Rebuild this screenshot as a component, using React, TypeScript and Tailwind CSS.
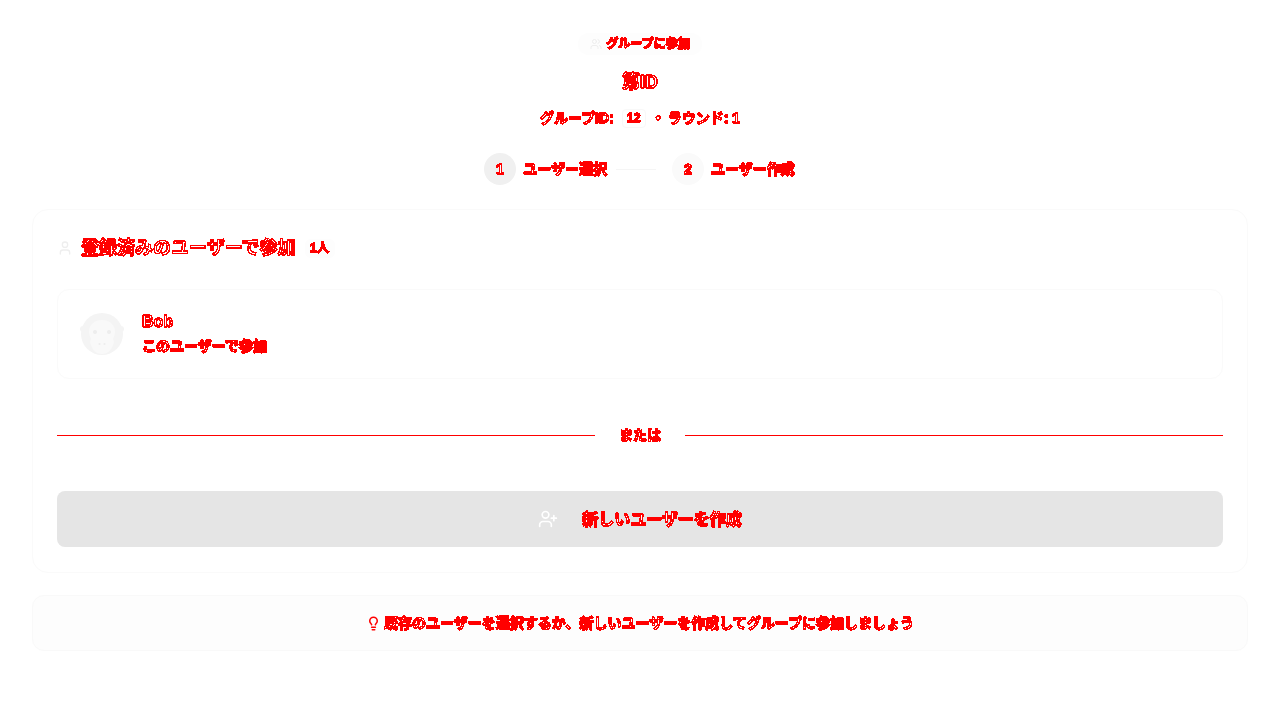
import type { ReactNode } from "react";
import { Lightbulb, User, UserPlus, Users } from "lucide-react";

const jp = "font-['Liberation_Sans','Noto_Sans_CJK_JP',sans-serif]";

// hard-edged outlined text, the filter is defined once in App
function T({ children }: { children: ReactNode }) {
  return <span className="text-white [-webkit-text-stroke:1px_#ff0000] [filter:url(#crisp)]">{children}</span>;
}

function MonkeyAvatar() {
  return (
    <svg width="44" height="44" viewBox="0 0 44 44" className="shrink-0">
      <circle cx="22" cy="22" r="21" fill="#f4f4f4" />
      <circle cx="3" cy="17" r="3" fill="#f4f4f4" />
      <circle cx="41" cy="17" r="3" fill="#f4f4f4" />
      <path d="M22 8c-8 0-13 5-13 12 0 3 1 5 2 7-1 2-1 4 0 6 2 6 6 9 11 9s9-3 11-9c1-2 1-4 0-6 1-2 2-4 2-7 0-7-5-12-13-12z" fill="#f9f9f9" />
      <circle cx="15" cy="20" r="2" fill="#ededed" />
      <circle cx="29" cy="20" r="2" fill="#ededed" />
      <circle cx="19.5" cy="32" r="1" fill="#ededed" />
      <circle cx="24.5" cy="32" r="1" fill="#ededed" />
    </svg>
  );
}

export default function App() {
  return (
    <main className={`min-h-[720px] bg-white px-8 pt-[33px] ${jp}`}>
      <svg width="0" height="0" className="absolute">
        <filter id="crisp" colorInterpolationFilters="sRGB" x="-5%" y="-20%" width="110%" height="140%">
          <feComponentTransfer>
            <feFuncR type="discrete" tableValues="1 1" />
            <feFuncG type="discrete" tableValues="0 0 0 0 0 1" />
            <feFuncB type="discrete" tableValues="0 0 0 0 0 1" />
            <feFuncA type="discrete" tableValues="0 1 1 1" />
          </feComponentTransfer>
        </filter>
      </svg>

      <header className="flex flex-col items-center">
        <p className="flex h-[22px] w-[124px] items-center justify-center gap-1 rounded-full bg-[#fdfdfd] text-xs font-bold">
          <Users size={12} className="text-[#eeeeee]" />
          <T>グループに参加</T>
        </p>
        <h1 className="mt-[13px] text-lg leading-7 font-bold">
          <T>第ID</T>
        </h1>
        <div className="mt-[12px] flex h-[20px] items-center text-sm font-bold">
          <T>グループID:</T>
          <span className="mr-[6px] ml-[8px] flex h-[19px] w-[24px] items-center justify-center rounded border border-[#f8f8f8] text-xs">
            <T>12</T>
          </span>
          <span className="mx-1">
            <T>•</T>
          </span>
          <span className="ml-[3px]">
            <T>ラウンド: 1</T>
          </span>
        </div>
        <ol className="mt-[25px] flex items-center text-sm font-bold">
          <li className="flex items-center gap-[7px]">
            <span className="flex size-8 items-center justify-center rounded-full bg-[#f0f0f0]">
              <T>1</T>
            </span>
            <T>ユーザー選択</T>
          </li>
          <li className="mr-4 ml-[9px] h-px w-10 bg-[#f5f5f5]" />
          <li className="flex items-center gap-[7px] pr-px">
            <span className="flex size-8 items-center justify-center rounded-full bg-[#fafafa]">
              <T>2</T>
            </span>
            <T>ユーザー作成</T>
          </li>
        </ol>
      </header>

      <section className="mt-6 rounded-2xl border border-[#fafafa] px-6 pt-6 pb-[25px]">
        <div className="flex h-7 items-center">
          <User size={16} className="text-[#eeeeee]" />
          <h2 className="ml-2 text-lg font-bold">
            <T>登録済みのユーザーで参加</T>
          </h2>
          <span className="ml-[9px] flex h-[19px] w-[30px] items-center justify-center rounded-md bg-[#fdfdfd] text-xs font-bold">
            <T>1人</T>
          </span>
        </div>

        <button className="mt-[27px] flex h-[90px] w-full items-center gap-[18px] rounded-xl border border-[#fafafa] px-[22px] text-left">
          <MonkeyAvatar />
          <span className="flex flex-col gap-1 font-bold">
            <span className="text-base leading-5">
              <T>Bob</T>
            </span>
            <span className="text-sm leading-5">
              <T>このユーザーで参加</T>
            </span>
          </span>
        </button>

        <div className="mt-[46px] flex items-center">
          <div className="h-px flex-1 bg-[#ff0000]" />
          <span className="px-6 text-sm font-bold">
            <T>または</T>
          </span>
          <div className="h-px flex-1 bg-[#ff0000]" />
        </div>

        <button className="mt-[46px] flex h-14 w-full items-center justify-center gap-6 rounded-lg bg-[#e5e5e5] text-base font-bold">
          <UserPlus size={20} className="text-white" />
          <span className="pt-0.5">
            <T>新しいユーザーを作成</T>
          </span>
        </button>
      </section>

      <aside className="mt-[22px] flex h-14 items-center justify-center gap-[3px] rounded-xl border border-[#f9f9f9] bg-[#fdfdfd] text-sm font-bold">
        <Lightbulb size={15} strokeWidth={2.5} className="text-[#ff0000]" />
        <T>既存のユーザーを選択するか、新しいユーザーを作成してグループに参加しましょう</T>
      </aside>
    </main>
  );
}
